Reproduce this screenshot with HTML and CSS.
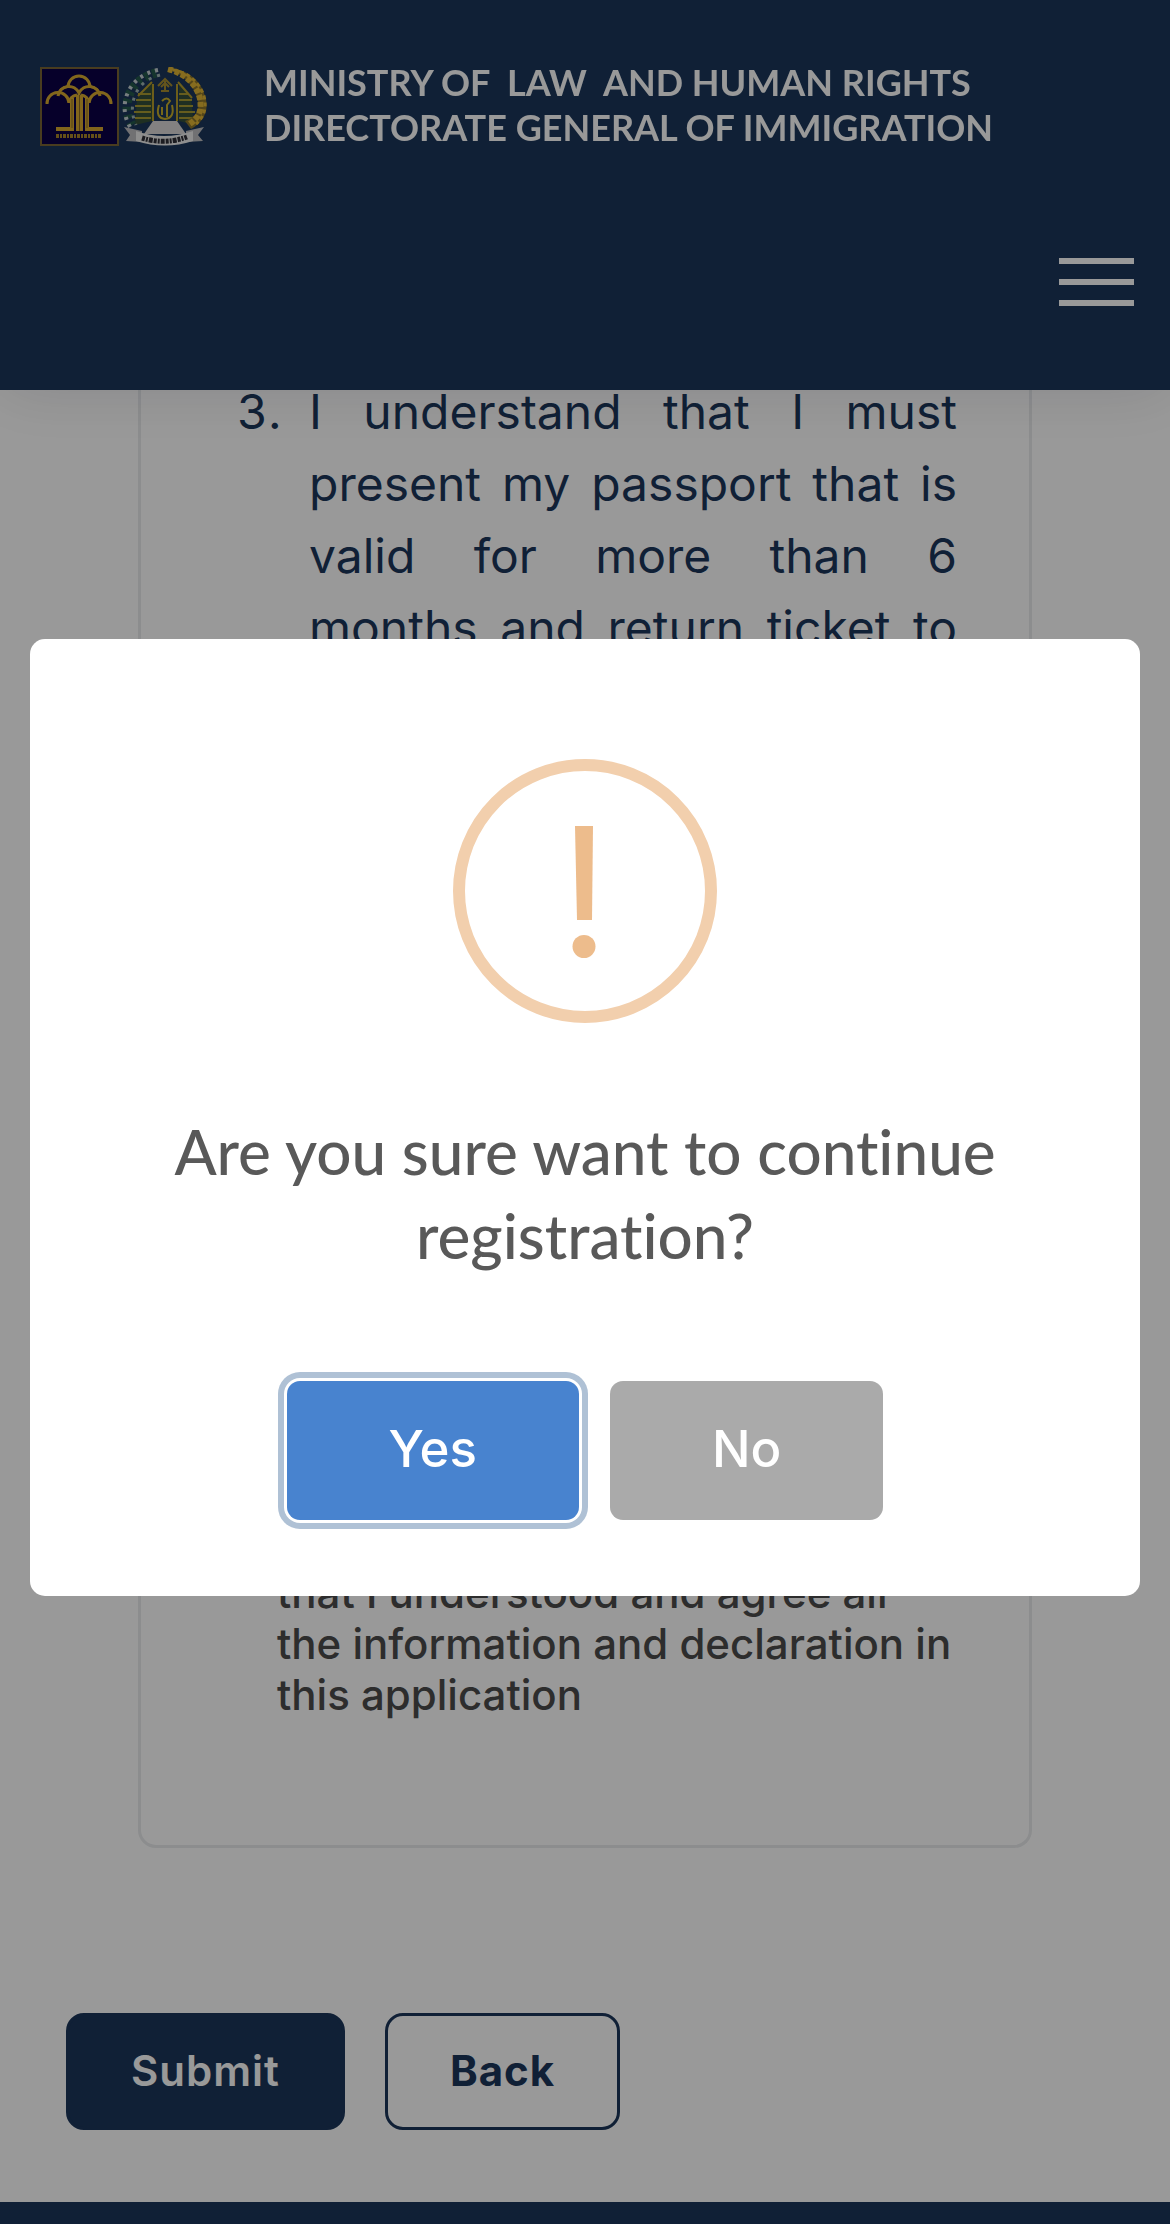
FILE: index.html
```html
<!DOCTYPE html>
<html lang="en">
<head>
  <meta charset="UTF-8">
  <meta name="viewport" content="width=device-width, initial-scale=1.0">
  <title>Registration</title>
  <link rel="stylesheet" href="styles.css">
</head>
<body>
  <header class="header">
    <a class="brand" href="#">
      <svg class="brand-logo" viewBox="0 0 168 82" aria-hidden="true">
        <!-- Ministry emblem -->
        <rect x="1" y="1" width="77" height="77" fill="#0a0046" stroke="#7a6434" stroke-width="2"/>
        <g fill="none" stroke="#d9ab30" stroke-width="3">
          <path d="M28 20a11 11 0 0 1 22 0"/>
          <path d="M18 29a11 11 0 0 1 21-3v4M60 29a11 11 0 0 0-21-3"/>
          <path d="M7 37a11 11 0 0 1 22-1M71 37a11 11 0 0 0-22-1"/>
          <path d="M28 20q-9 0-10 9M50 20q9 0 10 9" stroke-width="2"/>
          <path d="M29 36q1-7 8-8M49 36q-1-7-8-8"/>
        </g>
        <path d="M36 28h7v36h-7zM45 31h4v29h14v4H45zM34 31h-4v29H16v4h18z" fill="#d9ab30"/>
        <path d="M39.500 28v36M32 32v29M47 32v29" stroke="#8c6c26"/>
        <path d="M16 69h46" stroke="#a98528" stroke-width="4" stroke-dasharray="3 1 2 1"/>
        <!-- Immigration emblem -->
        <path d="M112 16v38l-17 4 2-26zM139 16v38l15 4-3-26z" fill="#354f3a"/>
        <path d="M98 27h13M96 33h15M95 39h16M94 45h17M95 51h16M139 27h10M139 33h13M139 39h14M139 45h16M139 51h15" stroke="#a99b32" stroke-width="2"/>
        <path d="M113 17v37M137 17v37M112 15l-14 14M138 15l14 16" stroke="#b49d2c" stroke-width="2" fill="none"/>
        <path d="M118 19l7-7 7 7M121 20l4-4 4 4M125 14v10M121 24h8" stroke="#a58d30" stroke-width="2" fill="none"/>
        <path d="M119 38q-4 13 6 14 10-1 7-14M122 34q5-5 8 0l-3 4v12M122 40v8" stroke="#c7ae2c" stroke-width="2" fill="none"/>
        <path d="M116 6C90 12 80 38 92 58" fill="none" stroke="#24594b" stroke-width="9" stroke-dasharray="4 4"/>
        <path d="M118 3C88 9 77 38 90 60" fill="none" stroke="#c7d1d4" stroke-width="4" stroke-dasharray="3 5"/>
        <path d="M120 8C95 14 87 38 96 58" fill="none" stroke="#a1b6b4" stroke-width="3" stroke-dasharray="3 6"/>
        <path d="M128 1c17 1 32 10 37 28 5 15-2 26-14 33l-6-8c10-4 15-10 13-20-3-15-15-26-30-33z" fill="#8d762b"/>
        <path d="M128 2c16 4 29 15 32 30 2 12-1 19-12 26" fill="none" stroke="#e0b534" stroke-width="6" stroke-dasharray="5 2"/>
        <path d="M133 3c15 2 26 12 31 26 3 12 0 21-8 28" fill="none" stroke="#e0b534" stroke-width="3" stroke-dasharray="4 3"/>
        <path d="M113 54h24l9 13h-42z" fill="#dad8d8"/>
        <path d="M84 60l18 4v11l-16-1 4-6zM164 60l-18 4v11l17-1-5-6z" fill="#bdbdc0"/>
        <path d="M96 64q28 10 57 0v10q-28 9-57 0z" fill="#ededed"/>
        <path d="M102 71q23 7 45-1" fill="none" stroke="#303038" stroke-width="5" stroke-dasharray="3 1 2 1 4 1"/>
      </svg>
      <span class="brand-name">MINISTRY OF&nbsp; LAW&nbsp; AND HUMAN RIGHTS<br>DIRECTORATE GENERAL OF IMMIGRATION</span>
    </a>
    <button class="menu-btn" type="button" aria-label="Menu">
      <span></span>
      <span></span>
      <span></span>
    </button>
  </header>

  <main class="content">
    <form>
      <div class="card">
        <ol class="terms" start="3">
          <li>I understand that I must present my passport that is valid for more than 6 months and return ticket to the Immigration Officer upon arrival in Indonesia</li>
        </ol>
        <div class="agree">
          <input type="checkbox" id="agree" checked>
          <label for="agree">I hereby declare<br>that I understood and agree all the information and declaration in this application</label>
        </div>
      </div>
      <div class="actions">
        <button class="btn btn-submit" type="submit">Submit</button>
        <button class="btn btn-back" type="button">Back</button>
      </div>
    </form>
  </main>

  <footer class="footer"></footer>

  <div class="overlay">
    <div class="modal" role="dialog" aria-modal="true" aria-labelledby="modal-title">
      <svg class="modal-icon" viewBox="0 0 264 264" aria-hidden="true">
        <circle cx="132" cy="132" r="126" fill="none" stroke="#f2cfad" stroke-width="12"/>
        <path d="M122 67h18l-1 94h-15z" fill="#edbc8c"/>
        <circle cx="131" cy="187.500" r="11.500" fill="#edbc8c"/>
      </svg>
      <h2 class="modal-title" id="modal-title">Are you sure want to continue registration?</h2>
      <div class="modal-actions">
        <button class="modal-btn modal-yes" type="button">Yes</button>
        <button class="modal-btn modal-no" type="button">No</button>
      </div>
    </div>
  </div>
</body>
</html>
```

FILE: styles.css
```css
:root {
  --navy: #1b365a;
  --text: #4b4b4b;
  --white: #ffffff;
  --border: #e9ebed;
}
* {
  box-sizing: border-box;
}
body {
  margin: 0;
  min-height: 100vh;
  display: flex;
  flex-direction: column;
  font-family: Inter, "Liberation Sans", sans-serif;
  color: var(--text);
  background: var(--white);
}
button {
  font-family: inherit;
  cursor: pointer;
}

/* Header */
.header {
  position: fixed;
  top: 0;
  left: 0;
  right: 0;
  z-index: 10;
  height: 390px;
  padding: 62px 36px 0 40px;
  display: flex;
  flex-direction: column;
  background: var(--navy);
  box-shadow: 0 0 60px rgba(8, 11, 48, 0.12);
}
.brand {
  display: flex;
  align-items: center;
  gap: 56px;
  height: 92px;
  color: var(--white);
  text-decoration: none;
}
.brand-logo {
  width: 168px;
  height: 82px;
}
.brand-name {
  padding-bottom: 6px;
  font-family: Lato, sans-serif;
  font-size: 36px;
  font-weight: 700;
  line-height: 45px;
  white-space: nowrap;
}
.menu-btn {
  align-self: flex-end;
  display: flex;
  flex-direction: column;
  gap: 15px;
  width: 75px;
  margin-top: 104px;
  padding: 0;
  border: none;
  background: none;
}
.menu-btn span {
  height: 6px;
  background: var(--white);
}

/* Form */
.content {
  flex: 1;
  padding: 0 66px 72px;
}
.card {
  margin: 0 72px;
  padding: 376px 72px 125px;
  border: 3px solid var(--border);
  border-top: none;
  border-radius: 0 0 18px 18px;
}
.terms {
  margin: 0;
  padding-left: 81px;
  font-size: 48px;
  line-height: 72px;
  color: var(--navy);
  text-align: justify;
}
.terms li {
  padding-left: 15px;
}
.agree {
  display: flex;
  gap: 24px;
  margin-top: 708px;
  font-size: 42px;
  font-weight: 500;
  line-height: 51px;
}
.agree input {
  flex: none;
  width: 40px;
  height: 40px;
  margin: 6px 0;
}
.actions {
  display: flex;
  gap: 40px;
  margin-top: 165px;
}
.btn {
  height: 117px;
  padding: 0 62px 3px;
  border: 3px solid var(--navy);
  border-radius: 18px;
  font-size: 42px;
  letter-spacing: 1px;
}
.btn-submit {
  font-weight: 600;
  background: var(--navy);
  color: var(--white);
}
.btn-back {
  font-weight: 700;
  background: var(--white);
  color: var(--navy);
}
.footer {
  height: 22px;
  background: var(--navy);
}

/* Confirm dialog */
.overlay {
  position: fixed;
  inset: 0;
  z-index: 20;
  display: flex;
  align-items: center;
  justify-content: center;
  padding: 40px 30px 30px;
  background: rgba(0, 0, 0, 0.4);
}
.modal {
  width: 100%;
  padding: 120px 48px 76px;
  display: flex;
  flex-direction: column;
  align-items: center;
  border-radius: 15px;
  background: var(--white);
}
.modal-icon {
  width: 264px;
  height: 264px;
}
.modal-title {
  margin: 86px 0 104px;
  font-family: Lato, sans-serif;
  font-size: 62px;
  font-weight: 500;
  font-variant-ligatures: none;
  line-height: 84px;
  text-align: center;
  color: #595959;
}
.modal-actions {
  display: flex;
  gap: 31px;
}
.modal-btn {
  height: 139px;
  padding: 0 102px 3px;
  border: none;
  border-radius: 13px;
  font-size: 51px;
  font-weight: 500;
  color: var(--white);
}
.modal-yes {
  background: #4883cf;
  box-shadow: 0 0 0 3px #ffffff, 0 0 0 9px #afc1d5;
}
.modal-no {
  background: #aaaaaa;
}
```
